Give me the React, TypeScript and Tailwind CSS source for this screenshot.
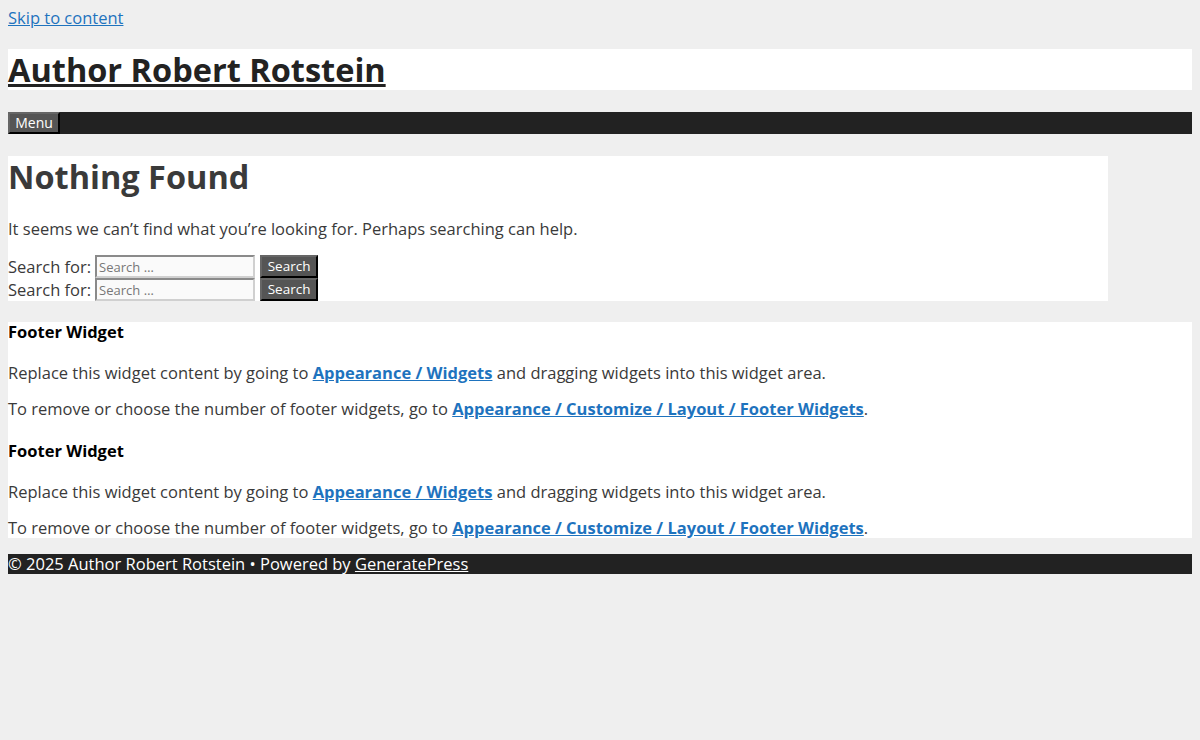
export default function App() {
  const font = { fontFamily: '"Open Sans", "Noto Sans", sans-serif' };
  const widget = (
    <>
      <h2 className="text-[16.5px] leading-[20px] font-bold text-black">Footer Widget</h2>
      <p className="mt-[20px] leading-[21px]">
        Replace this widget content by going to{' '}
        <a href="#" className="font-bold text-[#1e73be] underline">Appearance / Widgets</a> and dragging widgets into this widget area.
      </p>
      <p className="mt-[15px] leading-[21px]">
        To remove or choose the number of footer widgets, go to{' '}
        <a href="#" className="font-bold text-[#1e73be] underline">Appearance / Customize / Layout / Footer Widgets</a>.
      </p>
    </>
  );
  const searchForm = (
    <form className="flex items-stretch h-[23px]" onSubmit={(e) => e.preventDefault()}>
      <label className="leading-[23px] mr-[4px]">Search for:</label>
      <input
        type="search"
        placeholder="Search …"
        className="w-[160px] h-[23px] border-2 border-t-[#8a8a8a] border-l-[#8a8a8a] border-r-[#d0d0d0] border-b-[#d0d0d0] bg-[#fafafa] px-[2px] text-[13px] text-[#666] placeholder:text-[#777] outline-none"
      />
      <button className="ml-[5px] w-[58px] h-[23px] bg-[#555] text-white text-[13.5px] border-2 border-t-[#666] border-l-[#666] border-r-black border-b-black leading-none">
        Search
      </button>
    </form>
  );
  return (
    <div className="min-h-screen bg-[#efefef] p-2 text-[16.5px] text-[#3a3a3a]" style={font}>
      <a href="#" className="block text-[#1e73be] underline leading-[20px]">Skip to content</a>
      <header className="mt-[21px] bg-white h-[41px] flex items-center">
        <a href="#" className="text-[32.5px] font-bold text-[#222] underline leading-[41px]">Author Robert Rotstein</a>
      </header>
      <nav className="mt-[22px] bg-[#222] h-[22px] flex items-stretch">
        <button className="w-[52px] bg-[#555] text-white text-[14px] border-2 border-t-[#666] border-l-[#666] border-r-black border-b-black leading-none">
          Menu
        </button>
      </nav>
      <main className="mt-[22px] bg-white w-[1100px]">
        <h1 className="text-[32.5px] font-bold leading-[42px]">Nothing Found</h1>
        <p className="mt-[20px] leading-[22px]">It seems we can’t find what you’re looking for. Perhaps searching can help.</p>
        <div className="mt-[15px]">
          {searchForm}
          {searchForm}
        </div>
      </main>
      <section className="mt-[21px] bg-white">
        {widget}
        <div className="mt-[22px]">{widget}</div>
      </section>
      <footer className="mt-[16px] bg-[#222] text-white h-[20px] leading-[20px]">
        © 2025 Author Robert Rotstein • Powered by <a href="#" className="underline">GeneratePress</a>
      </footer>
    </div>
  );
}
